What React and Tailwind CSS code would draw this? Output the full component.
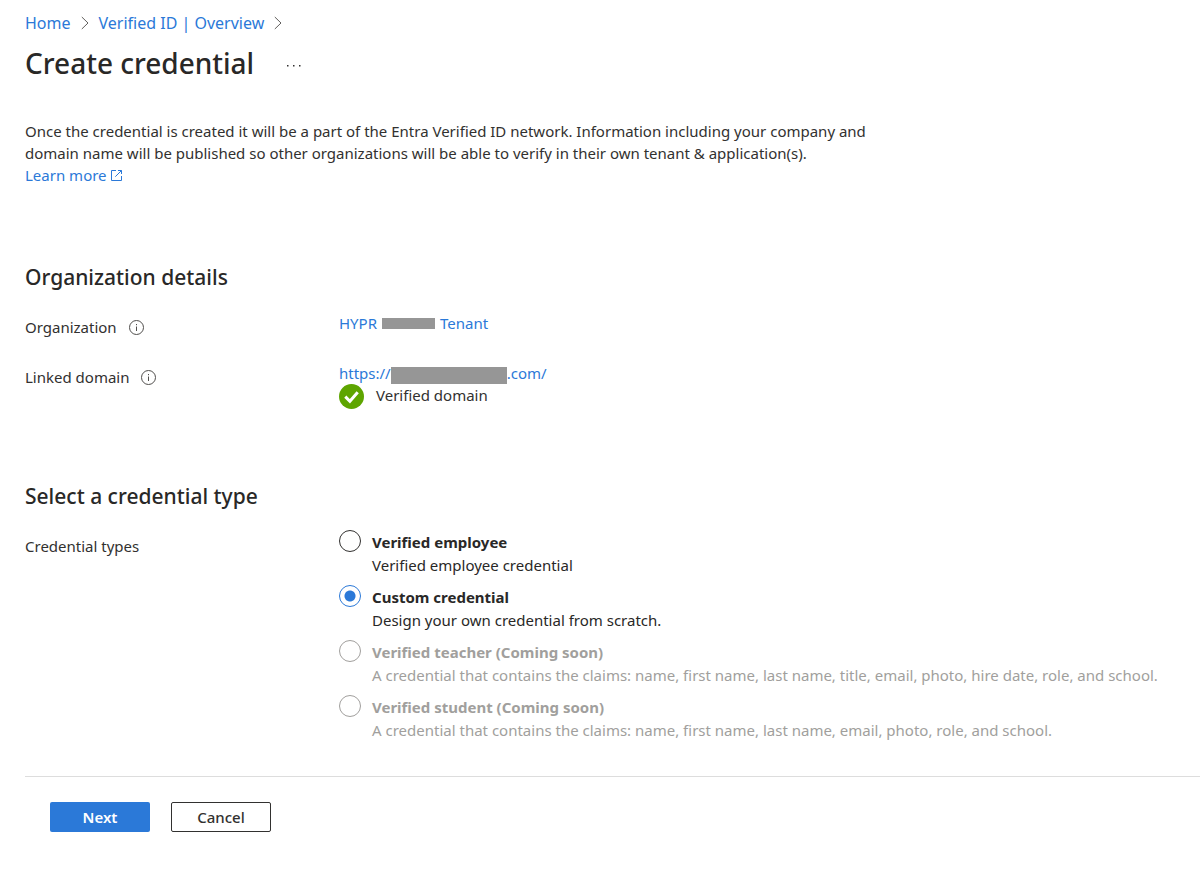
import React, { useState } from "react";

const CREDENTIAL_TYPES = [
  {
    id: "employee",
    title: "Verified employee",
    description: "Verified employee credential",
  },
  {
    id: "custom",
    title: "Custom credential",
    description: "Design your own credential from scratch.",
  },
  {
    id: "teacher",
    title: "Verified teacher (Coming soon)",
    description:
      "A credential that contains the claims: name, first name, last name, title, email, photo, hire date, role, and school.",
    disabled: true,
  },
  {
    id: "student",
    title: "Verified student (Coming soon)",
    description:
      "A credential that contains the claims: name, first name, last name, email, photo, role, and school.",
    disabled: true,
  },
];

function ChevronIcon() {
  return (
    <svg className="w-2 h-3.5 shrink-0" viewBox="0 0 8 14" fill="none" stroke="#605e5c" aria-hidden="true">
      <path d="M0.8 1 7 7 0.8 13" />
    </svg>
  );
}

function InfoIcon() {
  return (
    <svg className="w-4 h-4 shrink-0" viewBox="0 0 16 16" fill="none" stroke="#504e4c" aria-hidden="true">
      <circle cx="7.5" cy="8.5" r="7" />
      <path d="M7.5 7.5v4.5M7.5 5v1.2" />
    </svg>
  );
}

function ExternalIcon() {
  return (
    <svg className="w-3 h-3 shrink-0" viewBox="0 0 12 12" fill="none" stroke="#2b79d8" aria-hidden="true">
      <path d="M5 1.5H0.5v10h10V7M7 1.5h3.5v3.5M10.5 1.5 4.3 7.7" />
    </svg>
  );
}

function VerifiedIcon() {
  return (
    <svg className="w-[25px] h-[25px] shrink-0" viewBox="0 0 25 25" fill="none" aria-hidden="true">
      <circle cx="12.5" cy="12.5" r="12.5" fill="#5ea500" />
      <path d="M6.3 12.6 10.9 17.2 18.7 8.2" stroke="#fff" strokeWidth="3" />
    </svg>
  );
}

function FieldLabel({ children, info }) {
  return (
    <div className="w-[314px] shrink-0 flex items-center gap-3">
      <span>{children}</span>
      {info && <InfoIcon />}
    </div>
  );
}

function CredentialOption({ option, checked, onSelect }) {
  return (
    <label className={`flex gap-[11px] h-[55px] ${option.disabled ? "text-[#a19f9d]" : "text-[#292827]"}`}>
      <input
        type="radio"
        name="credential-type"
        value={option.id}
        checked={checked}
        disabled={option.disabled}
        onChange={() => onSelect(option.id)}
        className="appearance-none w-[22px] h-[22px] shrink-0 rounded-full border border-[#323130] bg-white checked:border-[#2b79d8] checked:bg-[radial-gradient(circle,#2b79d8_5px,transparent_6px)] disabled:border-[#a19f9d]"
      />
      <span className="flex flex-col pt-px">
        <span className="font-bold leading-[23px]">{option.title}</span>
        <span className="leading-[23px]">{option.description}</span>
      </span>
    </label>
  );
}

export default function App() {
  const [selected, setSelected] = useState("custom");

  return (
    <div className="min-h-screen bg-white text-[#323130] font-['Noto_Sans','Open_Sans',sans-serif] text-[15px] leading-[22px] pl-[25px] pt-[11px] pb-10">
      {/* Breadcrumb */}
      <nav className="flex items-center gap-2.5 text-base text-[#2b79d8]" aria-label="Breadcrumb">
        <a href="#home">Home</a>
        <ChevronIcon />
        <a href="#overview">Verified ID | Overview</a>
        <ChevronIcon />
      </nav>

      <header className="flex items-center gap-8 pt-[7px]">
        <h1 className="text-[28px] leading-[42px] font-medium text-[#292827]">Create credential</h1>
        <button type="button" aria-label="More options" className="pt-1">
          <svg className="w-4 h-2" viewBox="0 0 16 8" fill="#323130" aria-hidden="true">
            <rect x="1" y="4" width="1.5" height="1.5" />
            <rect x="7" y="4" width="1.5" height="1.5" />
            <rect x="13" y="4" width="1.5" height="1.5" />
          </svg>
        </button>
      </header>

      <div className="mt-9 max-w-[872px]">
        <p>
          Once the credential is created it will be a part of the Entra Verified ID network. Information including your
          company and domain name will be published so other organizations will be able to verify in their own tenant
          &amp; application(s).
        </p>
        <a href="#learn" className="inline-flex items-center gap-1 text-[#2b79d8]">
          Learn more
          <ExternalIcon />
        </a>
      </div>

      {/* Organization details */}
      <section className="mt-[75px]">
        <h2 className="text-[21px] leading-8 font-medium text-[#292827]">Organization details</h2>
        <div className="flex items-start mt-[19px]">
          <div className="pt-1">
            <FieldLabel info>Organization</FieldLabel>
          </div>
          <a href="#tenant" className="flex items-center gap-[5px] text-[#2b79d8]">
            HYPR
            <span className="w-[53px] h-[11px] bg-[#969696]" />
            Tenant
          </a>
        </div>
        <div className="flex items-start mt-6">
          <div className="pt-1">
            <FieldLabel info>Linked domain</FieldLabel>
          </div>
          <div>
            <a href="#domain" className="flex items-end text-[#2b79d8]">
              https://
              <span className="w-[116px] h-[17px] bg-[#969696]" />
              .com/
            </a>
            <div className="flex items-start gap-3">
              <VerifiedIcon />
              <span>Verified domain</span>
            </div>
          </div>
        </div>
      </section>

      {/* Credential types */}
      <section className="mt-[71px]">
        <h2 className="text-[21px] leading-8 font-medium text-[#292827]">Select a credential type</h2>
        <div className="flex items-start mt-[18px]">
          <div className="pt-[5px]">
            <FieldLabel>Credential types</FieldLabel>
          </div>
          <div role="radiogroup" aria-label="Credential types">
            {CREDENTIAL_TYPES.map(option => (
              <CredentialOption
                key={option.id}
                option={option}
                checked={selected === option.id}
                onSelect={setSelected}
              />
            ))}
          </div>
        </div>
      </section>

      <footer className="flex gap-[21px] mt-[26px] pt-[25px] pl-[25px] border-t border-[#dddddd]">
        <button type="button" className="w-[100px] h-[30px] rounded-xs bg-[#2b79d8] text-white font-semibold">
          Next
        </button>
        <button type="button" className="w-[100px] h-[30px] rounded-xs border border-[#323130] font-medium">
          Cancel
        </button>
      </footer>
    </div>
  );
}
